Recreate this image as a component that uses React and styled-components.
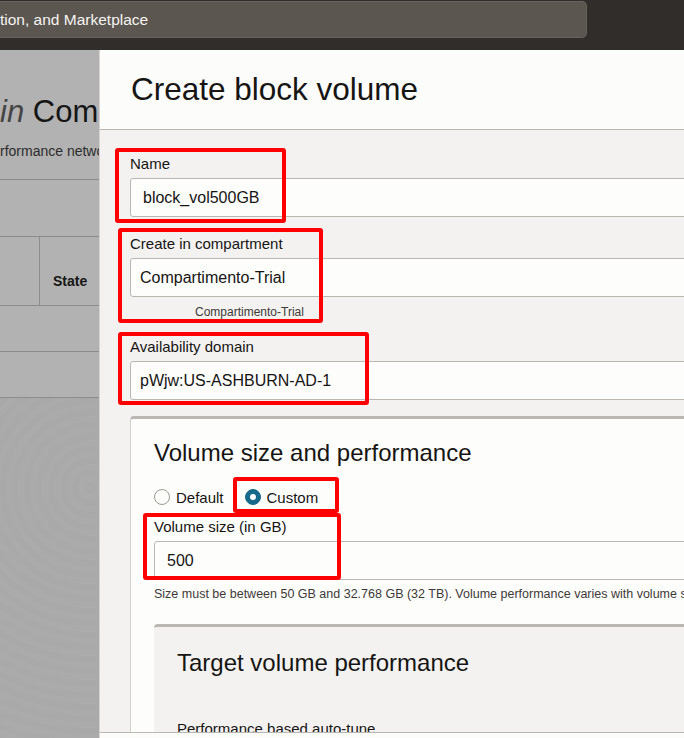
import React from 'react';
import styled, { createGlobalStyle } from 'styled-components';

const GlobalStyle = createGlobalStyle`
    html, body {
        margin: 0;
        height: 100%;
        overflow: hidden;
    }

    body {
        font-family: 'Liberation Sans', Arial, sans-serif;
        color: #161513;
    }

    * {
        box-sizing: border-box;
    }
`;

const Page = styled.div`
    display: flex;
    flex-direction: column;
    height: 100vh;
`;

const TopBar = styled.header`
    display: flex;
    align-items: flex-start;
    height: 50px;
    padding-top: 1px;
    background: #312d2a;
    flex-shrink: 0;
`;

const SearchBox = styled.div`
    display: flex;
    align-items: center;
    width: 587px;
    height: 37px;
    background: #5b5650;
    border: 1px solid #67625c;
    border-left: none;
    border-radius: 0 5px 5px 0;
    color: #f5f4f2;
    font-size: 15.5px;
    white-space: nowrap;
`;

const Main = styled.div`
    flex: 1;
    min-height: 0;
    display: grid;
    grid-template-columns: 99px 1fr;
    overflow: hidden;
`;

/* dimmed console page behind the drawer */

const Backdrop = styled.div`
    display: flex;
    flex-direction: column;
    overflow: hidden;
    background: #b2b2b2;
    white-space: nowrap;
`;

const PageHeader = styled.div`
    height: 130px;
    padding-top: 44px;
    border-bottom: 1px solid #8c8c8c;
`;

const PageTitle = styled.h1`
    margin: 0;
    font-size: 31px;
    line-height: 36px;
    font-weight: normal;
    color: #151515;

    em {
        color: #444;
    }
`;

const PageText = styled.p`
    margin: 12px 0 0;
    font-size: 14px;
    line-height: 18px;
    color: #2c2c2c;
`;

const BackdropRow = styled.div`
    display: flex;
    height: ${({ $height }) => $height}px;
    border-bottom: 1px solid #8c8c8c;
    flex-shrink: 0;
`;

const HeadCell = styled.div`
    display: flex;
    align-items: center;
    width: ${({ $width }) => ($width ? `${$width}px` : 'auto')};
    padding: 20px 0 0 13px;
    border-right: ${({ $divider }) => ($divider ? '1px solid #8c8c8c' : 'none')};
    font-size: 14px;
    font-weight: bold;
    color: #161513;
`;

const BackdropFill = styled.div`
    flex: 1;
    background:
        repeating-radial-gradient(circle at 90px 90px, rgba(0, 0, 0, 0.006) 0 6px, rgba(255, 255, 255, 0.006) 6px 12px),
        #aaaaaa;
`;

/* drawer */

const Panel = styled.section`
    display: flex;
    flex-direction: column;
    min-width: 0;
    overflow: hidden;
    background: #f3f2f1;
    border-left: 1px solid #d6d3d0;
`;

const PanelHeader = styled.div`
    display: flex;
    align-items: center;
    height: 80px;
    padding-left: 31px;
    background: #fcfcfb;
    border-bottom: 1px solid #bab6b2;
    flex-shrink: 0;
`;

const PanelTitle = styled.h2`
    margin: 0;
    font-size: 31.5px;
    font-weight: normal;
    color: #161513;
    white-space: nowrap;
`;

const PanelBody = styled.div`
    flex: 1;
    min-height: 0;
    overflow: hidden;
    padding: 24px 0 0 30px;
`;

const Form = styled.div`
    width: 640px;
`;

const PanelFooter = styled.div`
    height: 6px;
    background: #fcfcfb;
    border-top: 1px solid #bab6b2;
    flex-shrink: 0;
`;

const Field = styled.div`
    position: relative;
    margin-top: ${({ $gap }) => $gap || 0}px;
`;

const Label = styled.label`
    display: block;
    margin-bottom: 5px;
    font-size: 15px;
    line-height: 19px;
    color: #161513;
`;

const Input = styled.div`
    display: flex;
    align-items: center;
    height: 39px;
    padding-left: ${({ $indent }) => $indent || 12}px;
    background: #fdfdfc;
    border: 1px solid #bab6b2;
    border-radius: 3px;
    font-size: 16px;
    color: #161513;
`;

const Helper = styled.div`
    margin: 8px 0 0 65px;
    font-size: 12px;
    line-height: 14px;
    color: #3d3a37;
`;

const Hint = styled.div`
    margin-top: 7px;
    font-size: 12.5px;
    line-height: 15px;
    color: #3d3a37;
    white-space: nowrap;
`;

const Card = styled.div`
    margin-top: ${({ $gap }) => $gap}px;
    padding: ${({ $pad }) => $pad};
    background: ${({ $tone }) => ($tone === 'grey' ? '#f3f2f1' : '#fdfdfc')};
    border-top: 3px solid #bab6b2;
    border-left: ${({ $tone }) => ($tone === 'grey' ? 'none' : '1px solid #d4d0cc')};
    border-radius: 4px 0 0 0;
`;

const CardTitle = styled.h3`
    margin: 0;
    font-size: 24px;
    line-height: 28px;
    font-weight: normal;
    color: #161513;
    white-space: nowrap;
`;

const RadioRow = styled.div`
    display: flex;
    align-items: center;
    gap: 21px;
    height: 18px;
    margin-top: 21px;
`;

const RadioItem = styled.div`
    position: relative;
    display: flex;
    align-items: center;
    gap: 6px;
    font-size: 15px;
    color: #161513;
`;

const RadioDot = styled.span`
    display: inline-flex;
    align-items: center;
    justify-content: center;
    width: 16px;
    height: 16px;
    border-radius: 50%;
    background: ${({ $checked }) => ($checked ? '#16698a' : '#fdfdfc')};
    border: 1px solid ${({ $checked }) => ($checked ? '#16698a' : '#9e9892')};

    &::after {
        content: '';
        display: ${({ $checked }) => ($checked ? 'block' : 'none')};
        width: 6px;
        height: 6px;
        border-radius: 50%;
        background: #fff;
    }
`;

const SubLabel = styled.div`
    margin-top: 43px;
    font-size: 15px;
    line-height: 18px;
    color: #161513;
`;

/* red annotation frames drawn over the screenshot */
const Highlight = styled.span`
    position: absolute;
    top: ${({ $box }) => $box[0]}px;
    left: ${({ $box }) => $box[1]}px;
    width: ${({ $box }) => $box[2]}px;
    height: ${({ $box }) => $box[3]}px;
    border: 4px solid #ff0000;
    border-radius: 3px;
    pointer-events: none;
`;

const ConsoleBackdrop = () => (
    <Backdrop>
        <PageHeader>
            <PageTitle>
                <em>in</em> Compartment
            </PageTitle>
            <PageText>rformance network</PageText>
        </PageHeader>
        <BackdropRow $height={57} />
        <BackdropRow $height={69}>
            <HeadCell $width={40} $divider />
            <HeadCell>State</HeadCell>
        </BackdropRow>
        <BackdropRow $height={46} />
        <BackdropRow $height={46} />
        <BackdropFill />
    </Backdrop>
);

export default function App() {
    return (
        <Page>
            <GlobalStyle />
            <TopBar>
                <SearchBox>tion, and Marketplace</SearchBox>
            </TopBar>
            <Main>
                <ConsoleBackdrop />
                <Panel>
                    <PanelHeader>
                        <PanelTitle>Create block volume</PanelTitle>
                    </PanelHeader>
                    <PanelBody>
                        <Form>
                            <Field>
                                <Label>Name</Label>
                                <Input $indent={12}>block_vol500GB</Input>
                                <Highlight $box={[-6, -15, 171, 75]} />
                            </Field>
                            <Field $gap={17}>
                                <Label>Create in compartment</Label>
                                <Input $indent={9}>Compartimento-Trial</Input>
                                <Helper>Compartimento-Trial</Helper>
                                <Highlight $box={[-6, -12, 205, 95]} />
                            </Field>
                            <Field $gap={18}>
                                <Label>Availability domain</Label>
                                <Input $indent={9}>pWjw:US-ASHBURN-AD-1</Input>
                                <Highlight $box={[-5, -12, 251, 73]} />
                            </Field>
                            <Card $gap={16} $pad="20px 0 23px 23px">
                                <CardTitle>Volume size and performance</CardTitle>
                                <RadioRow>
                                    <RadioItem>
                                        <RadioDot />
                                        Default
                                    </RadioItem>
                                    <RadioItem>
                                        <RadioDot $checked />
                                        Custom
                                        <Highlight $box={[-12, -12, 106, 36]} />
                                    </RadioItem>
                                </RadioRow>
                                <Field $gap={11}>
                                    <Label>Volume size (in GB)</Label>
                                    <Input $indent={12}>500</Input>
                                    <Highlight $box={[-4, -11, 198, 67]} />
                                </Field>
                                <Hint>
                                    Size must be between 50 GB and 32.768 GB (32 TB). Volume performance
                                    varies with volume size.
                                </Hint>
                                <Card $gap={22} $tone="grey" $pad="22px 0 40px 23px">
                                    <CardTitle>Target volume performance</CardTitle>
                                    <SubLabel>Performance based auto-tune</SubLabel>
                                </Card>
                            </Card>
                        </Form>
                    </PanelBody>
                    <PanelFooter />
                </Panel>
            </Main>
        </Page>
    );
}
